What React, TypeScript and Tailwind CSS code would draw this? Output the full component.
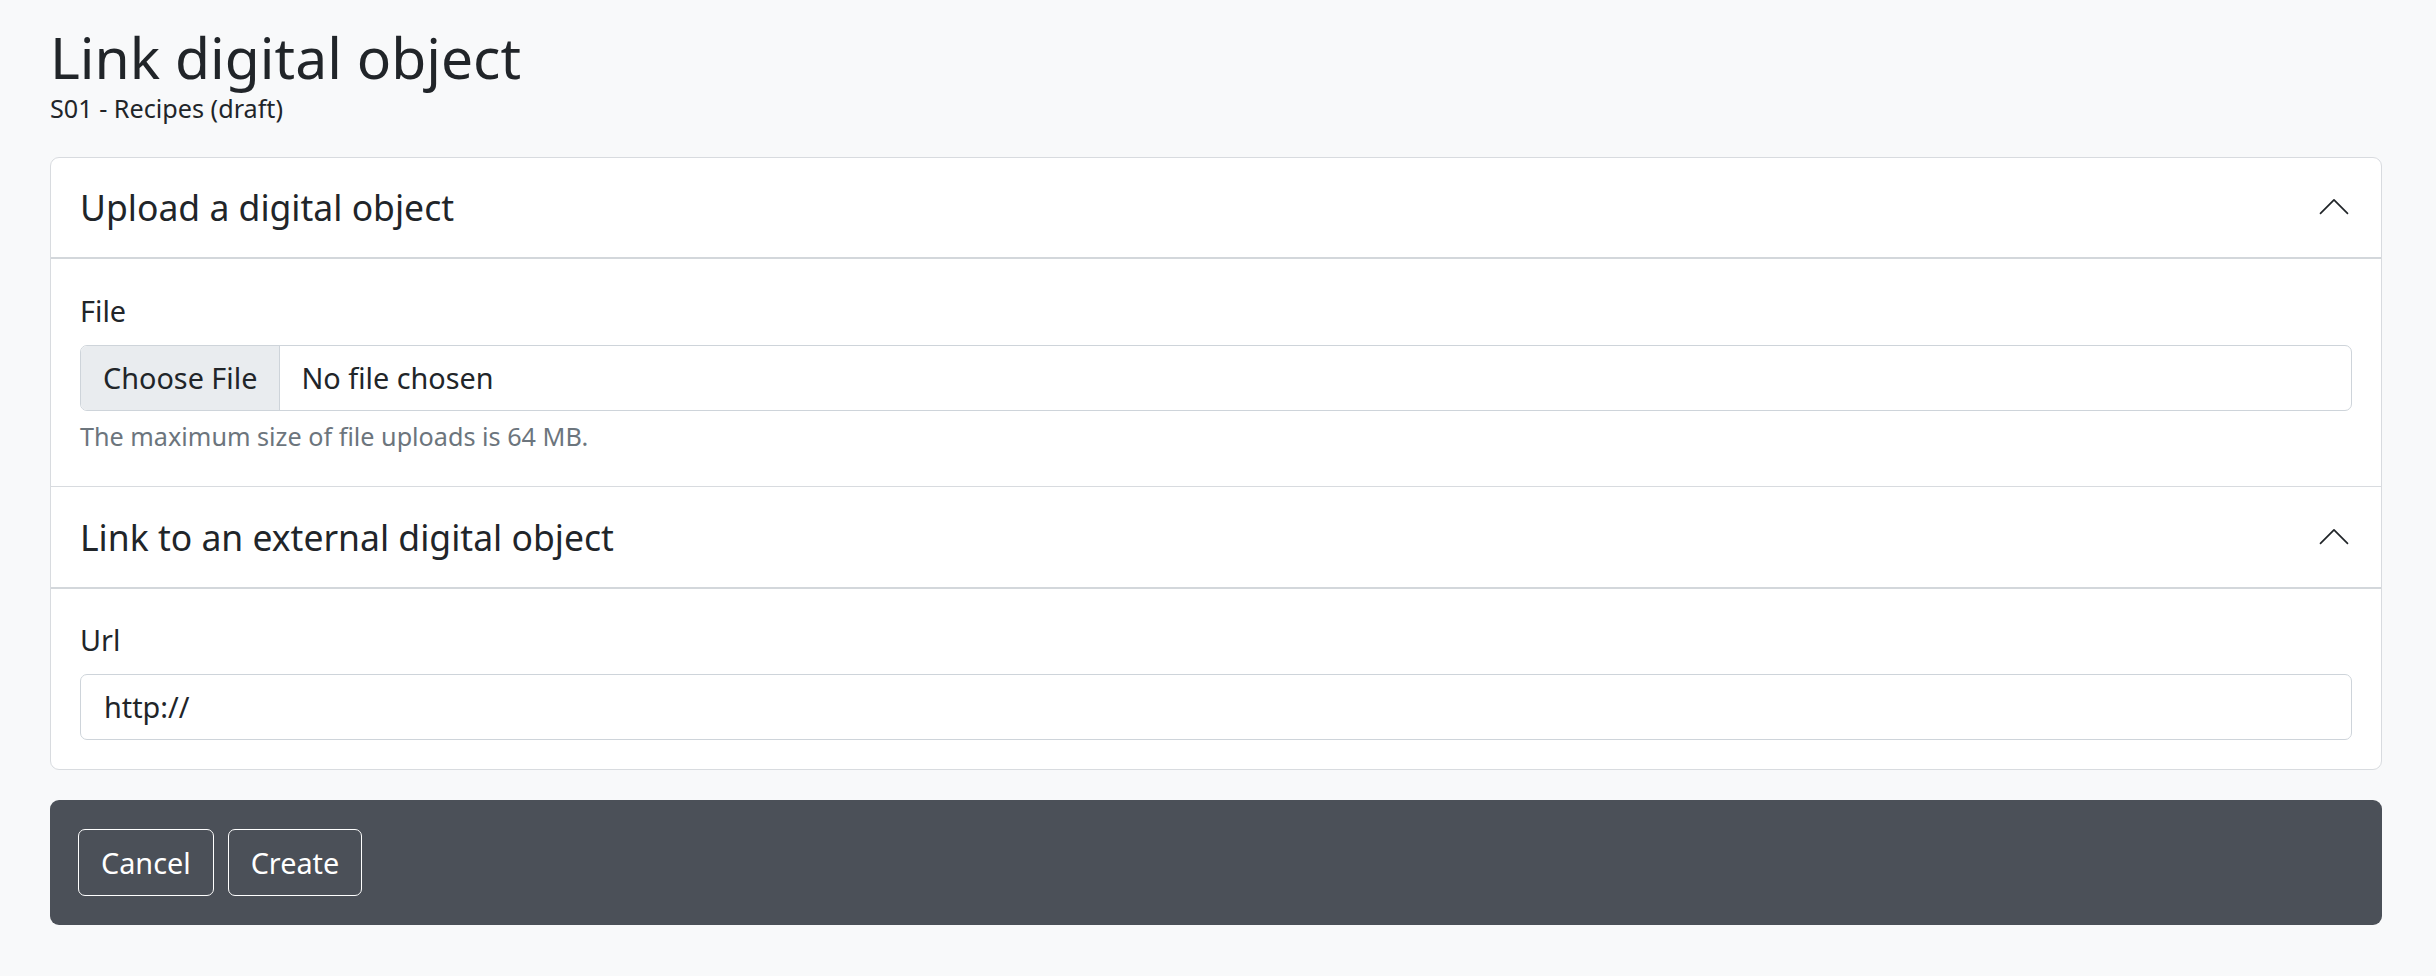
function ChevronUp() {
  return (
    <svg width="36" height="36" viewBox="0 0 16 16" fill="none" className="shrink-0">
      <path d="M2 10.8L8 4.8L14 10.8" stroke="#212529" strokeWidth="0.75" strokeLinecap="round" strokeLinejoin="round" />
    </svg>
  )
}

function SectionHeader({ title, first }: { title: string; first?: boolean }) {
  return (
    <div
      className={
        first
          ? 'flex h-[101px] items-center justify-between border-b-2 border-[#d3d7db] px-[29px]'
          : 'flex h-[103px] items-center justify-between border-t border-b-2 border-t-[#d8dbdf] border-b-[#d3d7db] px-[29px]'
      }
    >
      <h2 className="text-[35.5px] leading-[1.2] text-[#212529]">{title}</h2>
      <ChevronUp />
    </div>
  )
}

export default function App() {
  return (
    <div
      className="min-h-[976px] bg-[#f8f9fa] pl-[50px] pr-[54px] pt-[24px] text-[#212529]"
      style={{ fontFamily: '"Noto Sans", "Open Sans", sans-serif' }}
    >
      {/* Encabezado */}
      <h1 className="text-[57px] leading-[66px] font-normal">Link digital object</h1>
      <div className="text-[25.2px] leading-[37.8px]">S01 - Recipes (draft)</div>

      {/* Tarjeta con las dos secciones */}
      <div className="mt-[29px] overflow-hidden rounded-[9px] border border-[#d8dbdf] bg-white">
        <SectionHeader title="Upload a digital object" first />
        <div className="px-[29px] pt-[30px] pb-[30px]">
          <label className="mb-[13px] block text-[28.8px] leading-[43.2px]">File</label>
          <div className="flex h-[66px] items-stretch overflow-hidden rounded-[7px] border border-[#ced4da] text-[28.8px]">
            <span className="flex items-center border-r border-[#ced4da] bg-[#e9ecef] px-[22px]">Choose File</span>
            <span className="flex items-center pl-[21px]">No file chosen</span>
          </div>
          <p className="mt-[7px] text-[25.2px] leading-[37.8px] text-[#6c757d]">
            The maximum size of file uploads is 64 MB.
          </p>
        </div>

        <SectionHeader title="Link to an external digital object" />
        <div className="px-[29px] pt-[29px] pb-[29px]">
          <label className="mb-[13px] block text-[28.8px] leading-[43.2px]">Url</label>
          <div className="flex h-[66px] items-center rounded-[7px] border border-[#ced4da] pl-[23px] text-[28.8px]">
            http://
          </div>
        </div>
      </div>

      {/* Barra de acciones */}
      <div className="mt-[30px] flex gap-[14px] rounded-[9px] bg-[#4b5058] px-[28px] py-[29px]">
        <button className="h-[67px] rounded-[7px] border-[1.5px] border-white px-[22px] text-[28.8px] text-white">
          Cancel
        </button>
        <button className="h-[67px] rounded-[7px] border-[1.5px] border-white px-[22px] text-[28.8px] text-white">
          Create
        </button>
      </div>
    </div>
  )
}
